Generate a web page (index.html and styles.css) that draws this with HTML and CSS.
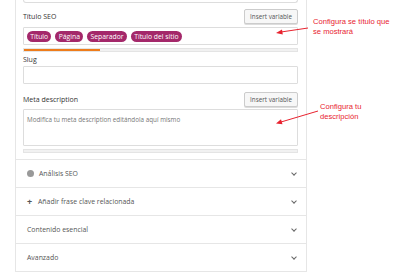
FILE: index.html
```html
<!DOCTYPE html>
<html lang="es">
<head>
    <meta charset="UTF-8">
    <title>Yoast SEO</title>
    <link rel="stylesheet" href="styles.css">
</head>
<body>
    <div class="page">
        <div class="panel">
            <div class="stub"></div>

            <!-- Título SEO -->
            <div class="field-head">
                <span class="label">Título SEO</span>
                <button class="btn-var">Insert variable</button>
            </div>
            <div class="input input-title">
                <span class="pill">Título</span>
                <span class="pill">Página</span>
                <span class="pill">Separador</span>
                <span class="pill">Título del sitio</span>
            </div>
            <div class="progress"><div class="progress-fill" style="width: 28%"></div></div>

            <!-- Slug -->
            <div class="label label-slug">Slug</div>
            <div class="input input-slug"></div>

            <!-- Meta description -->
            <div class="field-head field-meta">
                <span class="label">Meta description</span>
                <button class="btn-var">Insert variable</button>
            </div>
            <div class="input input-meta">Modifica tu meta description editándola aquí mismo</div>
            <div class="progress"><div class="progress-fill" style="width: 0%"></div></div>

            <div class="sections">
                <div class="section">
                    <span class="sec-title"><span class="dot"></span>Análisis SEO</span>
                    <span class="chev"></span>
                </div>
                <div class="section">
                    <span class="sec-title"><span class="plus">+</span>Añadir frase clave relacionada</span>
                    <span class="chev"></span>
                </div>
                <div class="section">
                    <span class="sec-title">Contenido esencial</span>
                    <span class="chev"></span>
                </div>
                <div class="section">
                    <span class="sec-title">Avanzado</span>
                    <span class="chev"></span>
                </div>
            </div>
        </div>
        <div class="after"></div>

        <!-- anotaciones -->
        <div class="note note-title">Configura se título que<br>se mostrará</div>
        <div class="note note-meta">Configura tu<br>descripción</div>
        <svg class="arrows" width="400" height="278" viewBox="0 0 400 278">
            <line x1="308" y1="28" x2="281" y2="32" stroke="#e8232f" stroke-width="1"/>
            <path d="M276,33 L282,29.5 L282.8,34.5 Z" fill="#e8232f"/>
            <line x1="318" y1="111" x2="281" y2="122" stroke="#e8232f" stroke-width="1"/>
            <path d="M276,123.5 L281,119.3 L282.5,124.3 Z" fill="#e8232f"/>
        </svg>
    </div>
</body>
</html>
```

FILE: styles.css
```css
/* página */
body {
    margin: 0;
    background: #fff;
    font-family: "Open Sans", "Noto Sans", sans-serif;
    color: #444;
}

.page {
    position: relative;
    width: 400px;
    height: 278px;
    overflow: hidden;
}

/* panel de Yoast */
.panel {
    margin-left: 15px;
    width: 290px;
    border-left: 1px solid #e6e6e6;
    border-right: 1px solid #e6e6e6;
    border-bottom: 1px solid #e6e6e6;
}

.stub {
    margin: 0 8px 0 7px;
    height: 2px;
    border: 1px solid #ddd;
    border-top: none;
    border-radius: 0 0 3px 3px;
}

.field-head {
    display: flex;
    justify-content: space-between;
    align-items: center;
    margin: 6px 8px 0 7px;
    height: 15px;
}

.field-meta {
    margin-top: 8px;
}

.label {
    font-size: 7px;
    color: #333;
}

.label-slug {
    margin: 3px 8px 0 7px;
    line-height: 10px;
}

.btn-var {
    height: 15px;
    padding: 0 5px;
    background: #f7f7f7;
    border: 1px solid #ccc;
    border-radius: 2px;
    font-family: "Open Sans", "Noto Sans", sans-serif;
    font-size: 6.3px;
    color: #555;
    box-shadow: 0 1px 0 #ddd;
}

.input {
    margin: 0 8px 0 7px;
    border: 1px solid #ddd;
    border-radius: 1px;
    box-sizing: border-box;
}

.input-title {
    margin-top: 3px;
    height: 18px;
    display: flex;
    align-items: center;
    gap: 4px;
    padding-left: 3px;
}

.pill {
    background: #a4286a;
    color: #fff;
    font-size: 6.8px;
    line-height: 11px;
    padding: 0 3.3px;
    border-radius: 6px;
}

.progress {
    margin: 3px 8px 0 7px;
    height: 4px;
    background: #f1f1f1;
    border: 1px solid #e4e4e4;
    box-sizing: border-box;
}

.progress-fill {
    height: 2px;
    background: #ee7c1b;
}

.input-slug {
    margin-top: 1px;
    height: 18px;
}

.input-meta {
    margin-top: 2px;
    height: 37px;
    padding: 5px 3px;
    font-size: 6.3px;
    color: #777;
}

/* secciones plegables */
.sections {
    margin-top: 6px;
    border-top: 1px solid #e6e6e6;
}

.section {
    height: 27px;
    display: flex;
    align-items: center;
    justify-content: space-between;
    padding: 0 10px 0 11px;
    border-bottom: 1px solid #e6e6e6;
}

.section:last-child {
    border-bottom: none;
}

.sec-title {
    display: flex;
    align-items: center;
    font-size: 6.9px;
    color: #555;
}

.dot {
    width: 7px;
    height: 7px;
    border-radius: 50%;
    background: #999;
    margin-right: 5px;
}

.plus {
    font-size: 9px;
    font-weight: bold;
    color: #555;
    margin-right: 5px;
    width: 6px;
}

.chev {
    width: 3px;
    height: 3px;
    border-right: 1.3px solid #666;
    border-bottom: 1.3px solid #666;
    transform: rotate(45deg);
    margin-top: -2px;
}

.after {
    margin: 6px 0 0 8px;
    border-top: 1px solid #e6e6e6;
}

/* anotaciones en rojo */
.note {
    position: absolute;
    font-family: "Liberation Sans", Arial, sans-serif;
    font-size: 7.6px;
    line-height: 10px;
    color: #e8232f;
}

.note-title {
    left: 313px;
    top: 17px;
}

.note-meta {
    left: 320px;
    top: 102px;
}

.arrows {
    position: absolute;
    left: 0;
    top: 0;
}
```
